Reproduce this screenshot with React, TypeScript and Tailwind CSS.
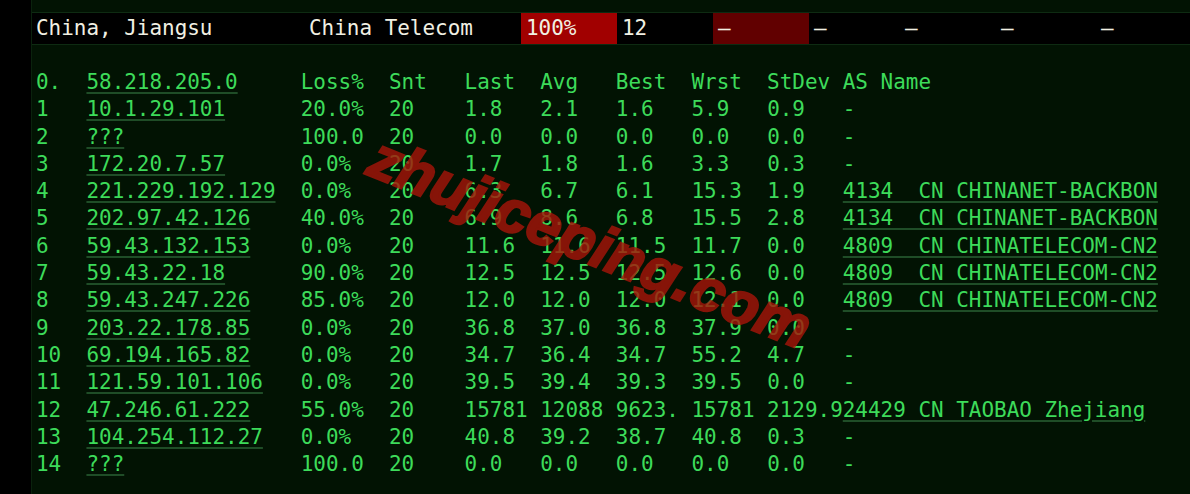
const rows: [string, string, string[], string | null][] = [
  ["1", "10.1.29.101", ["20.0%", "20", "1.8", "2.1", "1.6", "5.9", "0.9"], null],
  ["2", "???", ["100.0", "20", "0.0", "0.0", "0.0", "0.0", "0.0"], null],
  ["3", "172.20.7.57", ["0.0%", "20", "1.7", "1.8", "1.6", "3.3", "0.3"], null],
  ["4", "221.229.192.129", ["0.0%", "20", "6.3", "6.7", "6.1", "15.3", "1.9"], "4134  CN CHINANET-BACKBON"],
  ["5", "202.97.42.126", ["40.0%", "20", "6.9", "8.6", "6.8", "15.5", "2.8"], "4134  CN CHINANET-BACKBON"],
  ["6", "59.43.132.153", ["0.0%", "20", "11.6", "11.6", "11.5", "11.7", "0.0"], "4809  CN CHINATELECOM-CN2"],
  ["7", "59.43.22.18", ["90.0%", "20", "12.5", "12.5", "12.5", "12.6", "0.0"], "4809  CN CHINATELECOM-CN2"],
  ["8", "59.43.247.226", ["85.0%", "20", "12.0", "12.0", "12.0", "12.1", "0.0"], "4809  CN CHINATELECOM-CN2"],
  ["9", "203.22.178.85", ["0.0%", "20", "36.8", "37.0", "36.8", "37.9", "0.0"], null],
  ["10", "69.194.165.82", ["0.0%", "20", "34.7", "36.4", "34.7", "55.2", "4.7"], null],
  ["11", "121.59.101.106", ["0.0%", "20", "39.5", "39.4", "39.3", "39.5", "0.0"], null],
  ["12", "47.246.61.222", ["55.0%", "20", "15781", "12088", "9623.", "15781", "2129.9"], "24429 CN TAOBAO Zhejiang"],
  ["13", "104.254.112.27", ["0.0%", "20", "40.8", "39.2", "38.7", "40.8", "0.3"], null],
  ["14", "???", ["100.0", "20", "0.0", "0.0", "0.0", "0.0", "0.0"], null],
];

// column widths in characters after the host field
const widths = [7, 6, 6, 6, 6, 6, 6];

const fmt = (vals: string[]) => vals.map((v, i) => v.padEnd(widths[i])).join("");

const link =
  "underline decoration-[#1f4d27] decoration-2 underline-offset-[3px]";

function Line({ num, host, stats, as }: { num: string; host: string; stats: string; as: string | null }) {
  return (
    <div className="whitespace-pre">
      {num.padEnd(4)}
      <span className={link}>{host}</span>
      {" ".repeat(17 - host.length)}
      {stats}
      {as ? <span className={link}>{as}</span> : "-"}
    </div>
  );
}

export default function App() {
  return (
    <div className="flex h-[494px] w-[1190px] overflow-hidden bg-black font-['DejaVu_Sans_Mono',monospace] text-[20.95px]">
      <div className="w-[31px] shrink-0 bg-black" />
      <div className="relative flex flex-1 flex-col border-l border-[#0a220d] bg-[#021303]">
        <div className="h-[13px] border-b border-[#0e2b12]" />
        <div className="flex h-[32px] items-center border-b border-[#0e2b12] bg-black leading-none text-[#f1f0e3]">
          <div className="w-[272px] pl-[4px]">China, Jiangsu</div>
          <div className="w-[217px] pl-[5px]">China Telecom</div>
          <div className="flex h-full w-[96px] items-center bg-[#a10000] pl-[5px]">100%</div>
          <div className="w-[96px] pl-[5px]">12</div>
          <div className="flex h-full w-[96px] items-center bg-[#610000] pl-[5px]">–</div>
          <div className="w-[91px] pl-[5px]">–</div>
          <div className="w-[96px] pl-[5px]">–</div>
          <div className="w-[100px] pl-[5px]">–</div>
          <div className="flex-1 pl-[5px]">–</div>
        </div>
        <div className="pl-[4px] pt-[24px] leading-[27.29px] text-[#3ddb5a]">
          <div className="whitespace-pre">
            {"0.  "}
            <span className={link}>58.218.205.0</span>
            {" ".repeat(5)}
            {"Loss%  Snt   Last  Avg   Best  Wrst  StDev AS Name"}
          </div>
          {rows.map(([n, h, s, a]) => (
            <Line key={n} num={n} host={h} stats={fmt(s)} as={a} />
          ))}
        </div>
        <div className="pointer-events-none absolute left-[558px] top-[243px] -translate-x-1/2 -translate-y-1/2 rotate-[22deg] whitespace-nowrap font-['Liberation_Sans',sans-serif] text-[60px] font-bold italic leading-none text-[#a8150a] opacity-80 [-webkit-text-stroke:2.5px_#a8150a]">
          zhujiceping.com
        </div>
      </div>
    </div>
  );
}
